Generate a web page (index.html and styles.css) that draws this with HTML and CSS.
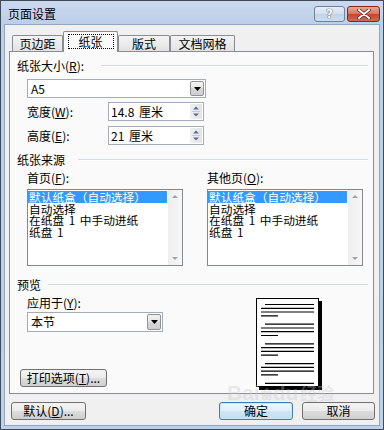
FILE: index.html
```html
<!DOCTYPE html>
<html>
<head>
<meta charset="utf-8">
<link rel="stylesheet" href="styles.css">
</head>
<body>
<div class="window">
  <div class="titlebar">
    <span class="title">页面设置</span>
    <div class="capbtns">
      <div class="cbtn help"><span>?</span></div>
      <div class="cbtn close">
        <svg width="14" height="10" viewBox="0 0 14 10"><path d="M2 1 L12 9 M12 1 L2 9" stroke="#5a1d14" stroke-width="3.4" stroke-linecap="round"/><path d="M2 1 L12 9 M12 1 L2 9" stroke="#fff" stroke-width="2" stroke-linecap="round"/></svg>
      </div>
    </div>
  </div>
  <div class="client">
    <div class="tabs">
      <div class="tab t1">页边距</div>
      <div class="tab sel"><span class="focus">纸张</span></div>
      <div class="tab t3">版式</div>
      <div class="tab t4">文档网格</div>
    </div>
    <div class="panel">
      <div class="ghead"><span>纸张大小(<u>R</u>):</span><div class="rule r1"></div></div>
      <div class="combo c-size">
        <span class="val">A5</span>
        <div class="dd"><svg width="7" height="4" viewBox="0 0 7 4"><path d="M0 0 H7 L3.5 4 Z" fill="#000"/></svg></div>
      </div>
      <div class="frow r-w">
        <span class="flabel">宽度(<u>W</u>):</span>
        <div class="spin">
          <span class="val">14.8 厘米</span>
          <div class="sbtn"><svg width="12" height="15" viewBox="0 0 12 15"><path d="M6 2.5 L9 5.5 H3 Z" fill="#5b6f8f"/><path d="M2 7.5 H10" stroke="#c8ccd2" stroke-width="1"/><path d="M3 9.5 H9 L6 12.5 Z" fill="#5b6f8f"/></svg></div>
        </div>
      </div>
      <div class="frow r-h">
        <span class="flabel">高度(<u>E</u>):</span>
        <div class="spin">
          <span class="val">21 厘米</span>
          <div class="sbtn"><svg width="12" height="15" viewBox="0 0 12 15"><path d="M6 2.5 L9 5.5 H3 Z" fill="#5b6f8f"/><path d="M2 7.5 H10" stroke="#c8ccd2" stroke-width="1"/><path d="M3 9.5 H9 L6 12.5 Z" fill="#5b6f8f"/></svg></div>
        </div>
      </div>
      <div class="ghead g2"><span>纸张来源</span><div class="rule r2"></div></div>
      <div class="cols">
        <div class="col">
          <div class="sublabel">首页(<u>F</u>):</div>
          <div class="list">
            <div class="items">
              <div class="item sel">默认纸盒（自动选择）</div>
              <div class="item">自动选择</div>
              <div class="item">在纸盘 1 中手动进纸</div>
              <div class="item">纸盘 1</div>
            </div>
            <div class="sb">
              <svg width="14" height="14" viewBox="0 0 14 14"><path d="M7 5 L10 8 H4 Z" fill="#a3a3a3"/></svg>
              <svg width="14" height="14" viewBox="0 0 14 14"><path d="M4 6 H10 L7 9 Z" fill="#a3a3a3"/></svg>
            </div>
          </div>
        </div>
        <div class="col">
          <div class="sublabel">其他页(<u>O</u>):</div>
          <div class="list">
            <div class="items">
              <div class="item sel">默认纸盒（自动选择）</div>
              <div class="item">自动选择</div>
              <div class="item">在纸盘 1 中手动进纸</div>
              <div class="item">纸盘 1</div>
            </div>
            <div class="sb">
              <svg width="14" height="14" viewBox="0 0 14 14"><path d="M7 5 L10 8 H4 Z" fill="#a3a3a3"/></svg>
              <svg width="14" height="14" viewBox="0 0 14 14"><path d="M4 6 H10 L7 9 Z" fill="#a3a3a3"/></svg>
            </div>
          </div>
        </div>
      </div>
      <div class="ghead g3"><span>预览</span><div class="rule r3"></div></div>
      <div class="prow">
        <div class="pleft">
          <div class="sublabel">应用于(<u>Y</u>):</div>
          <div class="combo c-apply">
            <span class="val">本节</span>
            <div class="dd"><svg width="7" height="4" viewBox="0 0 7 4"><path d="M0 0 H7 L3.5 4 Z" fill="#000"/></svg></div>
          </div>
          <div class="btn b-print">打印选项(<u>T</u>)...</div>
        </div>
        <div class="page">
          <svg width="61" height="87" viewBox="0 0 61 87" stroke="#000" stroke-width="1.2">
            <path d="M8 5.5 H57 M4 9.3 H57 M4 13 H57 M4 16.8 H21"/>
            <path d="M8 25.2 H57 M4 29 H57 M4 32.7 H57 M4 36.5 H21"/>
            <path d="M8 44.9 H57 M4 48.7 H57 M4 52.4 H57 M4 56.2 H21"/>
            <path d="M8 64.6 H57 M4 68.4 H57 M4 72.1 H57 M4 75.9 H21"/>
            <path d="M8 84.3 H57"/>
          </svg>
        </div>
      </div>
    </div>
    <div class="brow">
      <div class="btn b-def">默认(<u>D</u>)...</div>
      <div class="btn b-ok">确定</div>
      <div class="btn b-cancel">取消</div>
    </div>
  </div>
  <div class="watermark">Bai<span class="paw">❀</span>du<span class="jy">经验</span></div>
</div>
</body>
</html>
```

FILE: styles.css
```css
* { box-sizing: border-box; margin: 0; padding: 0; }
body {
  width: 384px;
  height: 430px;
  overflow: hidden;
  font-family: "Noto Sans CJK SC", "Noto Sans", sans-serif;
  font-size: 12px;
  color: #000;
  background: #fff;
}
u { text-decoration: underline; text-underline-offset: 1px; }

.window {
  position: relative;
  width: 384px;
  height: 430px;
  border: 1px solid #3f4a58;
  background: linear-gradient(#cad9ee, #bccfe8 24px, #bed1ea);
  padding: 0 4px 4px;
  display: flex;
  flex-direction: column;
}
.titlebar {
  height: 24px;
  margin: 0 -4px;
  padding-left: 7px;
  display: flex;
  align-items: flex-start;
}
.title {
  margin-top: 6px;
  line-height: 14px;
  font-size: 12px;
}
.capbtns {
  margin-left: auto;
  margin-right: 3px;
  margin-top: 5px;
  display: flex;
  gap: 2px;
}
.cbtn {
  height: 16px;
  border-radius: 3px;
  display: flex;
  align-items: center;
  justify-content: center;
}
.help {
  width: 31px;
  border: 1px solid #6f8199;
  background: linear-gradient(#e6eef8, #d2dfee 50%, #c2d3e8 50%, #cddcee);
}
.help span {
  color: #fff;
  font-family: "DejaVu Sans", sans-serif;
  font-weight: bold;
  font-size: 12px;
  line-height: 12px;
  text-shadow: 0 0 1px #3d4d63, 0 0 1px #3d4d63;
}
.close {
  width: 33px;
  border: 1px solid #7b2a20;
  background: linear-gradient(#e9a796, #d7735f 50%, #c4442f 50%, #d06a55);
}

.client {
  flex: 1;
  background: #f0f0f0;
  box-shadow: 0 0 0 1px #93a6bf;
  padding: 6px 5px 5px 4px;
  display: flex;
  flex-direction: column;
}

.tabs {
  height: 20px;
  display: flex;
  align-items: flex-end;
  padding-left: 3px;
  position: relative;
  z-index: 1;
}
.tab {
  height: 16px;
  border: 1px solid #898c95;
  border-bottom: none;
  border-radius: 2px 2px 0 0;
  background: linear-gradient(#f4f4f4, #e2e2e2);
  display: flex;
  align-items: center;
  justify-content: center;
  line-height: 14px;
}
.t1 { width: 51px; }
.t3 { width: 52px; }
.t4 { width: 65px; }
.tab.sel {
  width: 55px;
  height: 21px;
  margin-bottom: -1px;
  background: #fafafa;
  align-items: flex-start;
  padding-top: 2px;
}
.focus {
  display: block;
  width: 46px;
  height: 15px;
  border: 1px dotted #000;
  text-align: center;
  line-height: 13px;
}

.panel {
  height: 343px;
  border: 1px solid #898c95;
  background: #fafafa;
  padding: 7px 5px 0 7px;
}
.ghead {
  height: 14px;
  line-height: 14px;
  display: flex;
  align-items: center;
}
.rule {
  flex: 1;
  height: 2px;
  border-top: 1px solid #d5dbe1;
  border-bottom: 1px solid #ffffff;
}
.r1 { margin-left: 17px; }
.r2 { margin-left: 13px; }
.r3 { margin-left: 7px; }
.g2 { margin-top: 8px; }
.g3 { margin-top: 12px; }

.combo {
  height: 19px;
  border: 1px solid #a5acb5;
  background: #fff;
  display: flex;
  align-items: center;
}
.combo .val {
  flex: 1;
  padding-left: 3px;
  line-height: 14px;
}
.dd {
  width: 14px;
  height: 15px;
  margin-right: 1px;
  border: 1px solid #8e9196;
  border-radius: 2px;
  background: linear-gradient(#f3f3f3, #e4e4e4 50%, #d6d6d6 50%, #d0d0d0);
  display: flex;
  align-items: center;
  justify-content: center;
}
.c-size {
  width: 179px;
  margin: 6px 0 0 10px;
}
.c-apply {
  width: 136px;
  height: 20px;
  margin-top: 2px;
}
.c-apply .dd { height: 16px; }

.frow {
  height: 19px;
  margin-left: 10px;
  display: flex;
  align-items: center;
}
.r-w { margin-top: 4px; }
.r-h { margin-top: 5px; }
.flabel { width: 81px; line-height: 14px; }
.spin {
  width: 96px;
  height: 19px;
  border: 1px solid #a5acb5;
  background: #fff;
  display: flex;
  align-items: center;
}
.spin .val {
  flex: 1;
  padding-left: 2px;
  line-height: 14px;
  word-spacing: 2px;
}
.sbtn {
  width: 12px;
  height: 15px;
  margin-right: 1px;
  background: linear-gradient(90deg, #eef0f3, #e1e4e9);
  border: none;
  display: flex;
}

.cols {
  display: flex;
  gap: 24px;
  margin: 4px 0 0 10px;
}
.col { width: 156px; }
.sublabel {
  height: 14px;
  line-height: 14px;
}
.list {
  margin-top: 4px;
  height: 77px;
  border: 1px solid #828790;
  background: #fff;
  display: flex;
}
.items {
  flex: 1;
  padding-top: 1px;
  margin-right: 1px;
}
.item {
  height: 11.5px;
  line-height: 11.5px;
  font-size: 11.7px;
  white-space: nowrap;
  padding-left: 1px;
  word-spacing: 2px;
}
.item.sel {
  background: #3399ff;
  color: #fff;
}
.sb {
  width: 14px;
  background: linear-gradient(90deg, #eeeeee, #f7f7f7);
  display: flex;
  flex-direction: column;
  justify-content: space-between;
}

.prow {
  display: flex;
  margin-top: 4px;
}
.pleft {
  width: 136px;
  margin-left: 10px;
  display: flex;
  flex-direction: column;
}
.page {
  width: 63px;
  height: 89px;
  margin: 2px 0 0 93px;
  border: 1px solid #000;
  background: #fff;
  box-shadow: 3px 3px 0 #000;
}
.page svg { display: block; }

.btn {
  height: 18px;
  border: 1px solid #707070;
  border-radius: 3px;
  background: linear-gradient(#f3f3f3, #ebebeb 50%, #dddddd 50%, #cfcfcf);
  display: flex;
  align-items: center;
  justify-content: center;
  line-height: 14px;
  white-space: nowrap;
}
.b-print {
  width: 87px;
  margin: 37px 0 0 -7px;
}
.brow {
  height: 18px;
  margin: 8px -1px 0 2px;
  display: flex;
}
.b-def { width: 75px; }
.b-ok {
  width: 74px;
  margin-left: auto;
  border-color: #3c7fb1;
  background: linear-gradient(#eef6fc, #e0eef9 50%, #cfe5f5 50%, #c4def2);
  box-shadow: inset 0 0 0 1px #c8e6fa;
}
.b-cancel {
  width: 73px;
  margin-left: 9px;
}

.watermark {
  position: absolute;
  left: 226px;
  top: 380px;
  font-family: "Liberation Sans", sans-serif;
  font-weight: bold;
  font-size: 21px;
  line-height: 24px;
  color: rgba(200, 200, 200, 0.35);
  pointer-events: none;
  white-space: nowrap;
}
.paw { font-size: 16px; }
.jy { font-family: "Noto Sans CJK SC", sans-serif; font-size: 17px; margin-left: 2px; }
```
